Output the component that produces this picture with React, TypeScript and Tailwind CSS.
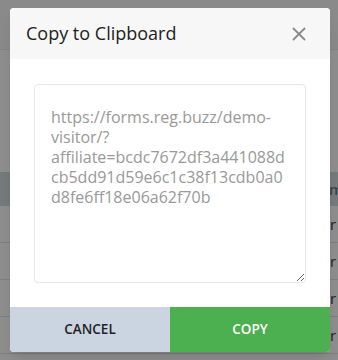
import { X } from "lucide-react";

const url =
  "https://forms.reg.buzz/demo-visitor/?affiliate=bcdc7672df3a441088dcb5dd91d59e6c1c38f13cdb0a0d8fe6ff18e06a62f70b";

export default function App() {
  return (
    <div className="relative h-[360px] w-[338px] overflow-hidden bg-[#8e8e8e] font-['Open_Sans',sans-serif]">
      {/* page behind the overlay */}
      <div className="h-[50px] border-b border-[#848484] bg-[#8a8a8a]" />
      <div className="h-[122px]" />
      <div className="flex h-[34px] items-center bg-[#757b7d] pl-[329px] text-[15px] font-semibold text-[#3c4548] whitespace-nowrap">
        m
      </div>
      {[0, 1, 2, 3].map((i) => (
        <div
          key={i}
          className="flex h-[37px] items-center border-b border-[#7b807d] pl-[330px] text-[15px] text-[#1e1e1e] whitespace-nowrap"
        >
          r
        </div>
      ))}

      {/* modal */}
      <div className="absolute left-[10px] top-[8px] flex h-[344px] w-[320px] flex-col overflow-hidden rounded-[4px] bg-white shadow-lg">
        <div className="flex h-[51px] items-center justify-between bg-[#f7f7f7] pl-[16px] pr-[20px]">
          <h2 className="text-[18px] text-[#222]">Copy to Clipboard</h2>
          <X className="h-[22px] w-[22px] text-[#8a8a8a]" strokeWidth={2} />
        </div>
        <div className="flex-1 px-[24px] pt-[25px]">
          <textarea
            readOnly
            value={url}
            className="h-[199px] w-full rounded-[4px] border border-[#e3e8ee] px-[16px] pt-[22px] text-[16px] leading-[20px] text-[#999] outline-none break-words"
          />
        </div>
        <div className="flex h-[45px]">
          <button className="flex w-1/2 items-center justify-center bg-[#cbd5e1] text-[13.5px] font-semibold text-[#1f2226]">
            CANCEL
          </button>
          <button className="flex w-1/2 items-center justify-center bg-[#4caf50] text-[13.5px] font-semibold text-white">
            COPY
          </button>
        </div>
      </div>
    </div>
  );
}
